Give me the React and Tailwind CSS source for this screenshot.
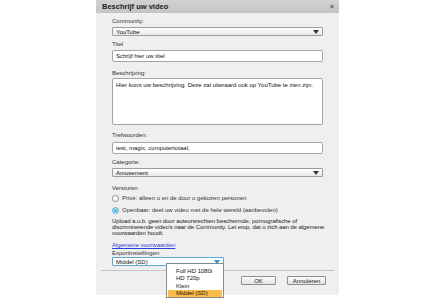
import React from "react";

const font = { fontFamily: '"Liberation Sans", Arial, sans-serif' };

const Label = ({ children, className = "" }) => (
  <div className={`h-[7px] flex items-center text-[6px] leading-none text-[#333] ${className}`}>
    {children}
  </div>
);

const Arrow = ({ color = "#333" }) => (
  <svg width="6" height="4" viewBox="0 0 6 4">
    <path d="M0 0 H6 L3 4 Z" fill={color} />
  </svg>
);

const Select = ({ value, className = "", focused = false }) => (
  <div
    className={`h-[9px] flex items-center justify-between pl-[3px] pr-[3px] rounded-[1px] border text-[6px] leading-none text-[#111] bg-gradient-to-b from-[#ffffff] to-[#e8e8e8] ${
      focused ? "border-[#5aa6d6]" : "border-[#9d9d9d]"
    } ${className}`}
  >
    <span>{value}</span>
    <Arrow color={focused ? "#2f8fd0" : "#333"} />
  </div>
);

const Input = ({ value, className = "" }) => (
  <div
    className={`h-[12px] flex items-center px-[3px] bg-white border border-[#a5a5a5] rounded-[2px] text-[6px] leading-none text-[#111] ${className}`}
  >
    {value}
  </div>
);

const Radio = ({ checked, label }) => (
  <div className="h-[12px] flex items-center gap-[3px]">
    {checked ? (
      <span className="w-[7px] h-[7px] rounded-full border border-[#8ab0c8] bg-[#32b8ea] shadow-[inset_0_0_0_1px_#bfe8f7]" />
    ) : (
      <span className="w-[7px] h-[7px] rounded-full border border-[#8a8a8a] bg-white" />
    )}
    <span className="text-[6px] leading-none text-[#333]">{label}</span>
  </div>
);

const Button = ({ children, className = "" }) => (
  <div
    className={`h-[9px] flex items-center justify-center border border-[#8f8f8f] rounded-[1px] bg-gradient-to-b from-[#fbfbfb] to-[#e3e3e3] text-[6px] leading-none text-[#222] ${className}`}
  >
    {children}
  </div>
);

export default function App() {
  const options = ["Full HD 1080i", "HD 720p", "Klein", "Middel (SD)"];

  return (
    <div className="w-[435px] h-[300px] bg-white overflow-hidden relative" style={font}>
      <div className="ml-[96px] w-[243px] h-[295px] bg-[#efefef] flex flex-col">
        {/* title bar */}
        <div className="h-[13px] flex items-center justify-between pl-[6px] pr-[5px] bg-gradient-to-b from-[#d2d2d2] to-[#c4c4c4]">
          <span className="text-[7.5px] font-bold text-[#222] leading-none">Beschrijf uw video</span>
          <span className="text-[7px] font-bold text-[#555] leading-none">×</span>
        </div>

        <div className="px-[16px] flex flex-col">
          <Label className="mt-[4px]">Community:</Label>
          <Select value="YouTube" className="mt-[3px]" />

          <Label className="mt-[4px]">Titel</Label>
          <Input value="Schrijf hier uw titel" className="mt-[3px]" />

          <Label className="mt-[7px]">Beschrijving:</Label>
          <div className="mt-[2px] h-[47px] bg-white border border-[#a5a5a5] rounded-[2px] px-[3px] pt-[3px] text-[6px] leading-none text-[#111]">
            Hier komt uw beschrijving. Deze zal uiteraard ook op YouTube te zien zijn.
          </div>

          <Label className="mt-[6px]">Trefwoorden:</Label>
          <Input value="test, magix, computertotaal," className="mt-[4px]" />

          <Label className="mt-[4px]">Categorie:</Label>
          <Select value="Amusement" className="mt-[3px]" />

          <Label className="mt-[7px]">Versturen</Label>
          <div className="mt-[1px] flex flex-col">
            <Radio label="Privé: alleen u en de door u gekozen personen" />
            <Radio checked label="Openbaar: deel uw video met de hele wereld (aanbevolen)" />
          </div>
          <div className="mt-[3px] mr-[-4px] text-[6px] leading-[5.8px] tracking-[-0.08px] text-[#222]">
            Upload a.u.b. geen door auteursrechten beschermde, pornografische of
            <br />
            discriminerende video's naar de Community. Let erop, dat u zich aan de algemene
            <br />
            voorwaarden houdt.
          </div>

          <Label className="mt-[5px]">
            <span className="text-[#2a3fd8] underline">Algemene voorwaarden</span>
          </Label>
          <Label className="mt-[1px]">Exportinstellingen</Label>
          <Select value="Middel (SD)" focused className="mt-[1px] w-[112px] bg-white from-white to-white" />
        </div>

        <div className="mt-[4px] mx-[5px] h-px bg-[#c4c4c4]" />

        <div className="mt-[5px] flex justify-end gap-[11px] pr-[13px]">
          <Button className="w-[35px]">OK</Button>
          <Button className="w-[39px]">Annuleren</Button>
        </div>
      </div>

      {/* dropdown list */}
      <div className="absolute left-[166px] top-[263px] w-[58px] h-[35px] bg-white border border-[#8a8a8a] px-[1px] pt-[3px] flex flex-col">
        {options.map((o) => (
          <div
            key={o}
            className={`h-[7.5px] flex items-center pl-[8px] text-[6px] leading-none text-[#111] ${
              o === "Middel (SD)" ? "bg-[#fdbb48]" : ""
            }`}
          >
            {o}
          </div>
        ))}
      </div>
    </div>
  );
}
